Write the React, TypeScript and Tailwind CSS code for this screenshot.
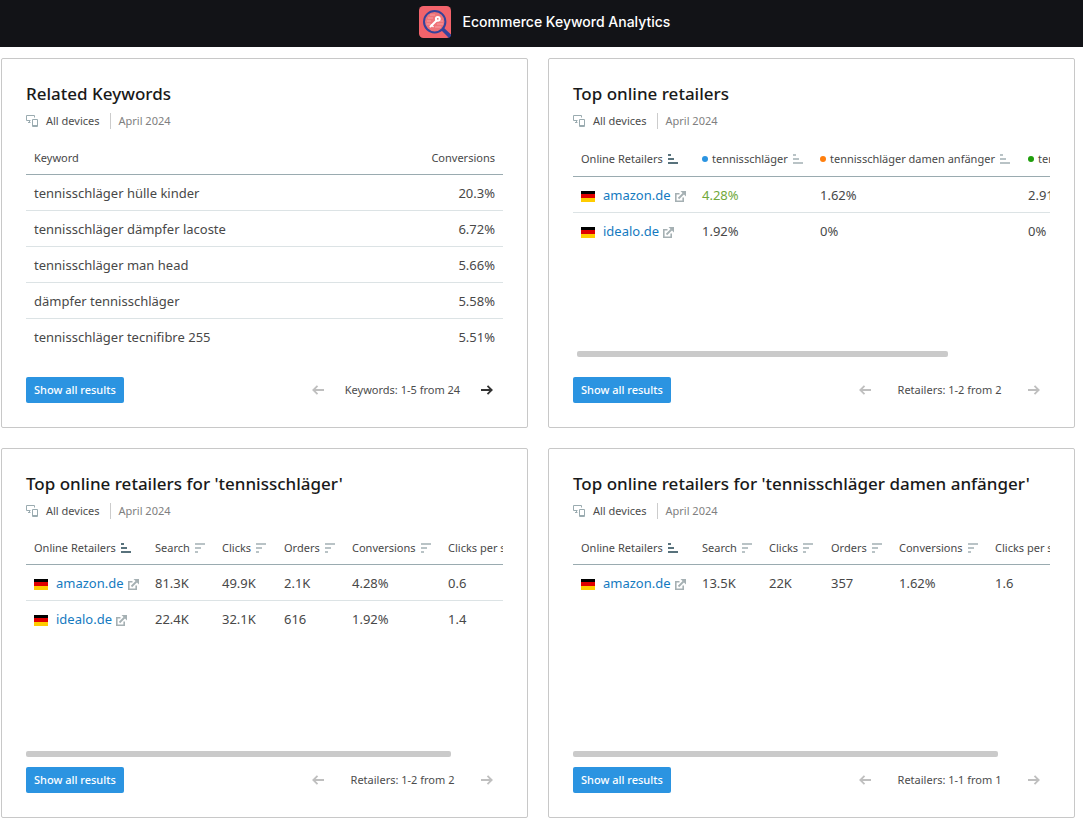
import type { ReactNode } from "react";
import clsx from "clsx";

type Sort = "asc" | "asc-idle" | "desc-idle";

type Column = {
  label: string;
  sort: Sort;
  width: string;
  dot?: string;
};

type Retailer = {
  name: string;
  values: string[];
  highlight?: number;
};

const keywords = [
  { keyword: "tennisschläger hülle kinder", conversions: "20.3%" },
  { keyword: "tennisschläger dämpfer lacoste", conversions: "6.72%" },
  { keyword: "tennisschläger man head", conversions: "5.66%" },
  { keyword: "dämpfer tennisschläger", conversions: "5.58%" },
  { keyword: "tennisschläger tecnifibre 255", conversions: "5.51%" },
];

const compareColumns: Column[] = [
  { label: "Online Retailers", sort: "asc", width: "w-[121px]" },
  { label: "tennisschläger", sort: "asc-idle", width: "w-[118px]", dot: "bg-[#2b94e1]" },
  { label: "tennisschläger damen anfänger", sort: "asc-idle", width: "w-[208px]", dot: "bg-[#ff7f0e]" },
  { label: "tennisschläger kinder", sort: "asc-idle", width: "w-[158px]", dot: "bg-[#1f9e0c]" },
];

const metricColumns: Column[] = [
  { label: "Online Retailers", sort: "asc", width: "w-[121px]" },
  { label: "Search", sort: "desc-idle", width: "w-[67px]" },
  { label: "Clicks", sort: "desc-idle", width: "w-[62px]" },
  { label: "Orders", sort: "desc-idle", width: "w-[68px]" },
  { label: "Conversions", sort: "desc-idle", width: "w-[96px]" },
  { label: "Clicks per search", sort: "desc-idle", width: "w-[121px]" },
];

function Logo() {
  return (
    <svg viewBox="0 0 32 32" className="size-8 shrink-0" aria-hidden="true">
      <rect width="32" height="32" rx="4.5" fill="#f2636b" />
      <path d="M22 24l2.500-2.500L32 28.500V30l-2 2z" fill="#35439b" />
      <circle cx="15.700" cy="15.700" r="10.700" fill="#ee7378" stroke="#35439b" strokeWidth="2" />
      <path d="M9 12h5M8 15h4M7.500 18h4M18 18h6M16 21h6M11 9h5M21 15h3" stroke="#f8a5a8" strokeWidth="0.900" />
      <path d="M11.500 20.500l6-6" stroke="#fff" strokeWidth="2" strokeLinecap="round" />
      <path d="M12 18.500l2.500 2.500" stroke="#fff" strokeWidth="1.200" />
      <circle cx="18.800" cy="12.800" r="1.900" fill="none" stroke="#fff" strokeWidth="2" />
    </svg>
  );
}

function DevicesIcon() {
  return (
    <svg viewBox="0 0 12 12" className="size-3 shrink-0" fill="none" stroke="#9aabb0" aria-hidden="true">
      <path d="M8.500 2.500V.5h-8v5h4M2 7.500h2.500M3.500 5.500v2" />
      <path d="M6.500 4.500h5v7h-5zM6.500 10.500h5" />
    </svg>
  );
}

function SortIcon({ sort }: { sort: Sort }) {
  return (
    <svg
      viewBox="0 0 10 10"
      className={clsx("size-2.5 shrink-0", sort === "asc" ? "fill-[#58727c]" : "fill-[#b9c3c6]")}
      aria-hidden="true"
    >
      {sort === "desc-idle" ? (
        <path d="M0 0h10v2H0zM0 4h6v2H0zM0 8h3v2H0z" />
      ) : (
        <path d="M0 0h3v2H0zM0 4h6v2H0zM0 8h10v2H0z" />
      )}
    </svg>
  );
}

function ExternalIcon() {
  return (
    <svg viewBox="0 0 11 11" className="size-[11px] shrink-0" fill="none" stroke="#a5b0b3" aria-hidden="true">
      <path d="M4.500 2.800H.8v7.400h7.400V6.500" strokeWidth="1.600" />
      <path d="M3.500 7.500l5-5" strokeWidth="1.800" />
      <path d="M5.500 0H11v5.500z" fill="#a5b0b3" stroke="none" />
    </svg>
  );
}

function Arrow({ back, active }: { back?: boolean; active?: boolean }) {
  return (
    <svg
      viewBox="0 0 12 10"
      className={clsx("h-2.5 w-3", active ? "stroke-[#333]" : "stroke-[#bfbfbf]")}
      fill="none"
      strokeWidth="1.800"
      aria-hidden="true"
    >
      <path d={back ? "M12 5H1.500M5.500.8L1.300 5l4.200 4.200" : "M0 5h10.500M6.500.8L10.700 5 6.500 9.200"} />
    </svg>
  );
}

function Flag() {
  return (
    <span className="flex h-[11px] w-3.5 shrink-0 flex-col" role="img" aria-label="Germany">
      <span className="flex-1 bg-black" />
      <span className="flex-1 bg-[#e00000]" />
      <span className="flex-1 bg-[#ffcc00]" />
    </span>
  );
}

type CardProps = {
  title: string;
  pager: string;
  hasNext?: boolean;
  children: ReactNode;
};

function Card({ title, pager, hasNext, children }: CardProps) {
  return (
    <section className="flex min-h-[370px] min-w-0 flex-col rounded-xs border border-[#c8c8c8] p-6">
      <h2 className="text-[17px] leading-[22px] font-medium text-[#191919]">{title}</h2>
      <div className="mt-2 flex items-center text-[11px] leading-4">
        <DevicesIcon />
        <span className="ml-2 text-[#4c4c4c]">All devices</span>
        <span className="ml-2.5 border-l border-[#ccc] pl-2 text-[#808080]">April 2024</span>
      </div>
      <div className="mt-[11px] flex flex-1 flex-col">{children}</div>
      <div className="flex items-center justify-between">
        <button type="button" className="h-[26px] rounded-xs bg-[#2b94e1] px-2 text-[11px] font-medium text-white">
          Show all results
        </button>
        <div className="flex items-center gap-4 pr-2.5 text-[11px] leading-4 text-[#4c4c4c]">
          <button type="button" aria-label="Previous page" disabled>
            <Arrow back />
          </button>
          <span className="min-w-[125px] text-center">{pager}</span>
          <button type="button" aria-label="Next page" disabled={!hasNext}>
            <Arrow active={hasNext} />
          </button>
        </div>
      </div>
    </section>
  );
}

function KeywordTable() {
  return (
    <table className="w-full text-[#484848]">
      <thead>
        <tr className="h-[34px] border-b border-[#9aabb0] text-[11px]">
          <th className="px-2 pt-0.5 text-left font-normal">Keyword</th>
          <th className="px-2 pt-0.5 text-right font-normal">Conversions</th>
        </tr>
      </thead>
      <tbody>
        {keywords.map((row) => (
          <tr key={row.keyword} className="h-9 border-b border-[#dce3e5] text-[13px] last:border-transparent">
            <td className="px-2 pt-1">{row.keyword}</td>
            <td className="px-2 pt-1 text-right">{row.conversions}</td>
          </tr>
        ))}
      </tbody>
    </table>
  );
}

function RetailerTable({ columns, rows, tall }: { columns: Column[]; rows: Retailer[]; tall?: boolean }) {
  return (
    <div className="flex-1 overflow-hidden">
      <table className={clsx("table-fixed whitespace-nowrap text-[#484848]", tall ? "w-[605px]" : "w-[535px]")}>
        <thead>
          <tr className={clsx("border-b border-[#9aabb0] text-[11px]", tall ? "h-9" : "h-[34px]")}>
            {columns.map((col) => (
              <th key={col.label} className={clsx("pt-0.5 pl-2 font-normal", col.width)}>
                <div className="flex items-center gap-[5px]">
                  <span className="flex items-center gap-1">
                    {col.dot && <span className={clsx("size-1.5 shrink-0 rounded-full", col.dot)} />}
                    {col.label}
                  </span>
                  <SortIcon sort={col.sort} />
                </div>
              </th>
            ))}
          </tr>
        </thead>
        <tbody>
          {rows.map((row) => (
            <tr key={row.name} className="h-9 border-b border-[#dce3e5] text-[13px] last:border-transparent">
              <td className="pt-1 pl-2">
                <div className="flex items-center">
                  <Flag />
                  <a href={"#" + row.name} className="ml-2 flex items-center gap-1 text-[#147abf]">
                    {row.name}
                    <ExternalIcon />
                  </a>
                </div>
              </td>
              {row.values.map((value, i) => (
                <td key={i} className={clsx("pt-1 pl-2", row.highlight === i && "text-[#70a83b]")}>
                  {value}
                </td>
              ))}
            </tr>
          ))}
        </tbody>
      </table>
    </div>
  );
}

export default function App() {
  return (
    <div className="min-h-screen bg-white font-['Noto_Sans',sans-serif]">
      <header className="flex h-[47px] items-center justify-center gap-3 bg-[#121317] pb-1 pl-1.5">
        <Logo />
        <h1 className="font-['Inter',sans-serif] text-sm font-medium text-white">Ecommerce Keyword Analytics</h1>
      </header>

      <main className="grid grid-cols-2 gap-5 pt-[11px] pr-2 pb-1 pl-px">
        <Card title="Related Keywords" pager="Keywords: 1-5 from 24" hasNext>
          <KeywordTable />
        </Card>

        <Card title="Top online retailers" pager="Retailers: 1-2 from 2">
          <RetailerTable
            tall
            columns={compareColumns}
            rows={[
              { name: "amazon.de", values: ["4.28%", "1.62%", "2.91%"], highlight: 0 },
              { name: "idealo.de", values: ["1.92%", "0%", "0%"] },
            ]}
          />
          <div className="mx-1 mb-5">
            <div className="h-1.5 w-[79%] rounded-xs bg-[#cacaca]" />
          </div>
        </Card>

        <Card title="Top online retailers for 'tennisschläger'" pager="Retailers: 1-2 from 2">
          <RetailerTable
            columns={metricColumns}
            rows={[
              { name: "amazon.de", values: ["81.3K", "49.9K", "2.1K", "4.28%", "0.6"] },
              { name: "idealo.de", values: ["22.4K", "32.1K", "616", "1.92%", "1.4"] },
            ]}
          />
          <div className="mb-2.5 h-1.5 w-[89%] rounded-xs bg-[#cacaca]" />
        </Card>

        <Card title="Top online retailers for 'tennisschläger damen anfänger'" pager="Retailers: 1-1 from 1">
          <RetailerTable
            columns={metricColumns}
            rows={[{ name: "amazon.de", values: ["13.5K", "22K", "357", "1.62%", "1.6"] }]}
          />
          <div className="mb-2.5 h-1.5 w-[89%] rounded-xs bg-[#cacaca]" />
        </Card>
      </main>
    </div>
  );
}
